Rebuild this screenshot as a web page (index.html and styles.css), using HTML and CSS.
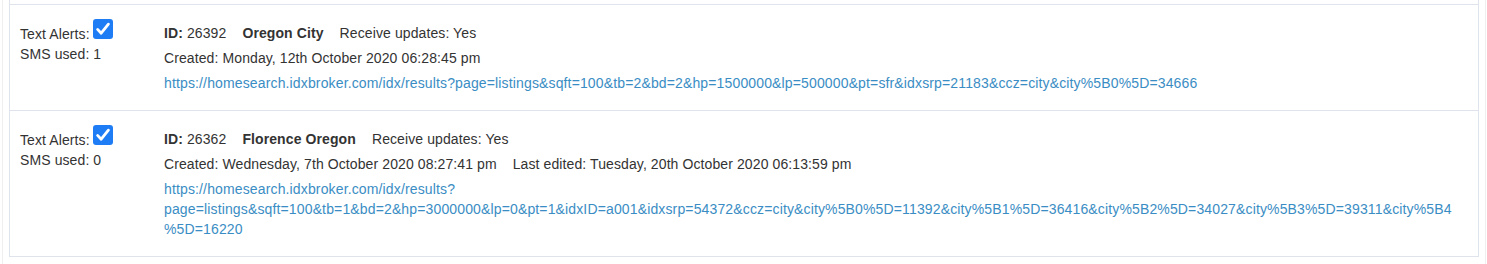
FILE: index.html
```html
<!DOCTYPE html>
<html lang="en">
<head>
<meta charset="utf-8">
<title>Saved searches</title>
<link rel="stylesheet" href="styles.css">
</head>
<body>
<div class="panel">
  <div class="list">
    <div class="row">
      <div class="col-alerts">
        <div class="alert-line">Text Alerts:<span class="checkbox"><svg viewBox="0 0 20 20" width="20" height="20"><path d="M4.6 10.4 L8.2 14.2 L15.4 5.2" fill="none" stroke="#fff" stroke-width="2.8" stroke-linecap="round" stroke-linejoin="round"/></svg></span></div>
        <div>SMS used: 1</div>
      </div>
      <div class="col-info">
        <div class="meta"><span><b>ID:</b> 26392</span><b>Oregon City</b><span>Receive updates: Yes</span></div>
        <div class="meta"><span>Created: Monday, 12th October 2020 06:28:45 pm</span></div>
        <div class="url"><a href="#">https://homesearch.idxbroker.com/idx/results?page=listings&amp;sqft=100&amp;tb=2&amp;bd=2&amp;hp=1500000&amp;lp=500000&amp;pt=sfr&amp;idxsrp=21183&amp;ccz=city&amp;city%5B0%5D=34666</a></div>
      </div>
    </div>
    <div class="row">
      <div class="col-alerts">
        <div class="alert-line">Text Alerts:<span class="checkbox"><svg viewBox="0 0 20 20" width="20" height="20"><path d="M4.6 10.4 L8.2 14.2 L15.4 5.2" fill="none" stroke="#fff" stroke-width="2.8" stroke-linecap="round" stroke-linejoin="round"/></svg></span></div>
        <div>SMS used: 0</div>
      </div>
      <div class="col-info">
        <div class="meta"><span><b>ID:</b> 26362</span><b>Florence Oregon</b><span>Receive updates: Yes</span></div>
        <div class="meta"><span>Created: Wednesday, 7th October 2020 08:27:41 pm</span><span>Last edited: Tuesday, 20th October 2020 06:13:59 pm</span></div>
        <div class="url"><a href="#">https://homesearch.idxbroker.com/idx/results?page=listings&amp;sqft=100&amp;tb=1&amp;bd=2&amp;hp=3000000&amp;lp=0&amp;pt=1&amp;idxID=a001&amp;idxsrp=54372&amp;ccz=city&amp;city%5B0%5D=11392&amp;city%5B1%5D=36416&amp;city%5B2%5D=34027&amp;city%5B3%5D=39311&amp;city%5B4%5D=16220</a></div>
      </div>
    </div>
  </div>
</div>
</body>
</html>
```

FILE: styles.css
```css
html, body {
  margin: 0;
  padding: 0;
  background: #ffffff;
}

body {
  font-family: "Liberation Sans", Arial, Helvetica, sans-serif;
  font-size: 14px;
  line-height: 20px;
  color: #333333;
  letter-spacing: 0.1px;
}

.panel {
  margin: 0 1px 0 2px;
  padding: 0 6px;
  min-height: 264px;
  box-sizing: border-box;
  border-left: 1px solid #f0f0f0;
  border-right: 1px solid #f0f0f0;
}

.list {
  padding-top: 4px;
  border-left: 1px solid #dfe4ec;
  border-right: 1px solid #dfe4ec;
  border-bottom: 1px solid #dfe4ec;
}

.row {
  display: flex;
  border-top: 1px solid #dfe4ec;
}

.col-alerts {
  flex: 0 0 154px;
  box-sizing: border-box;
  padding: 14px 0 0 10px;
}

.checkbox {
  display: inline-block;
  width: 20px;
  height: 20px;
  margin-left: 3px;
  border-radius: 3px;
  background: #1e7cf4;
  vertical-align: baseline;
}

.checkbox svg {
  display: block;
}

.col-info {
  flex: 1 1 auto;
  min-width: 0;
  padding: 18px 20px 17px 0;
}

.meta {
  display: flex;
  gap: 16px;
  margin-bottom: 5px;
}

.url {
  overflow-wrap: break-word;
  word-wrap: break-word;
}

.url a {
  color: #3a8dc4;
  text-decoration: none;
  letter-spacing: 0.14px;
}
```
